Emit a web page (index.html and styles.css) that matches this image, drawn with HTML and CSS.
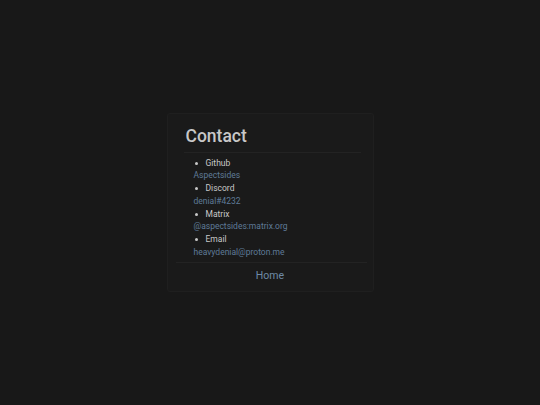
FILE: index.html
```html
<!DOCTYPE html>
<html>
<head>
<meta charset="utf-8">
<link rel="stylesheet" href="styles.css">
</head>
<body>
<main class="page">
  <section class="card">
    <h1 class="title">Contact</h1>
    <hr class="rule">
    <ul class="list">
      <li class="item">Github</li>
      <a class="link" href="#">Aspectsides</a>
      <li class="item">Discord</li>
      <a class="link" href="#">denial#4232</a>
      <li class="item">Matrix</li>
      <a class="link" href="#">@aspectsides:matrix.org</a>
      <li class="item">Email</li>
      <a class="link" href="#">heavydenial@proton.me</a>
    </ul>
    <hr class="rule rule-wide">
    <div class="home"><a class="home-link" href="#">Home</a></div>
  </section>
</main>
</body>
</html>
```
FILE: styles.css
```css
html, body {
  margin: 0;
  padding: 0;
  height: 100%;
  background: #181818;
  font-family: Roboto, "Liberation Sans", sans-serif;
}
.page {
  height: 100%;
  display: flex;
  align-items: center;
  justify-content: center;
}
.card {
  width: 207px;
  box-sizing: border-box;
  padding: 10px 6px 8px 6px;
  background: #1a1a1a;
  border: 1px solid #1f1f1f;
  border-radius: 3px;
}
.title {
  margin: 0 0 0 12px;
  font-size: 17.5px;
  font-weight: 500;
  color: #c8c8c8;
  line-height: 24px;
}
.rule {
  border: 0;
  border-top: 1px solid #232323;
  margin: 4px 6px 4px 10px;
}
.rule-wide {
  margin: 4px 0 6px 2px;
}
.list {
  margin: 0;
  padding: 0 0 0 32px;
  font-size: 8.5px;
  line-height: 12.7px;
}
.item {
  color: #c8c8c8;
  list-style: none;
  position: relative;
}
.item::before {
  content: "";
  position: absolute;
  left: -11px;
  top: 5px;
  width: 3px;
  height: 3px;
  border-radius: 50%;
  background: #c8c8c8;
}
.link {
  display: block;
  margin-left: -12px;
  color: #5f7b98;
  text-decoration: none;
}
.home {
  text-align: center;
  font-size: 10.5px;
  line-height: 14px;
}
.home-link {
  color: #6e8aa6;
  text-decoration: none;
}
```
